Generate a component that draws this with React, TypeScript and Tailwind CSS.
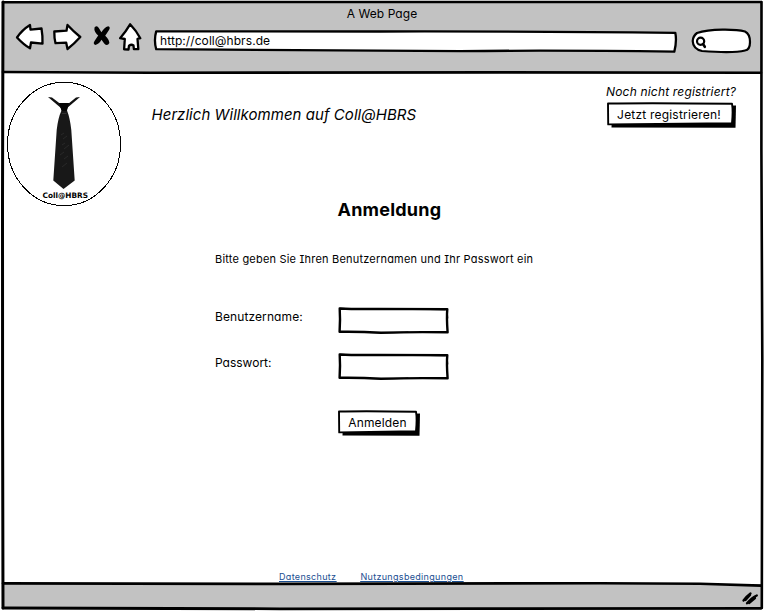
import React from "react";

const sketchFont =
  "font-[Inter,'Open_Sans',sans-serif] [font-feature-settings:'cv11','cv08'] whitespace-nowrap";

function Frame() {
  return (
    <svg
      className="pointer-events-none absolute inset-0"
      width="764"
      height="611"
      viewBox="0 0 764 611"
      fill="none"
      stroke="black"
      strokeWidth="3"
      strokeLinecap="round"
      strokeLinejoin="round"
    >
      <path d="M3 2.3 L240 2 L761 2" strokeWidth="2.6" />
      <path d="M3 2 L2.5 200 L2.6 420 L3 608" />
      <path d="M761.5 2 L761.4 150 L762.3 360 L761.8 608" strokeWidth="2.6" />
      <path d="M3 72 L150 72.7 L500 72.4 L761 72.8" strokeWidth="2.6" />
      <path d="M3 583.4 L280 583.9 L400 583.6 L600 583.2 L700 583.8 L761 585.6" strokeWidth="2.6" />
      <path d="M3 608 L280 608.8 L480 608.6 L761 608.3" strokeWidth="2.8" />
    </svg>
  );
}

function Back() {
  return (
    <svg width="30" height="30" viewBox="15 22 30 30" fill="white" stroke="black" strokeWidth="2.3" strokeLinejoin="round">
      <path d="M17 37.5 Q22 30 30 25 L30.5 29.7 L41.5 28.5 Q42.8 36 42.5 43.7 L31 42.5 L30 48.3 Q24 45 17 37.5Z" />
    </svg>
  );
}

function Forward() {
  return (
    <svg width="31" height="30" viewBox="52 22 31 30" fill="white" stroke="black" strokeWidth="2.3" strokeLinejoin="round">
      <path d="M54.3 31.5 L66.5 30.7 L67.5 25 Q73 31 80.3 37 Q74 44 67.5 49 L66.2 42.7 L55.5 43.2 Q54.2 38 54.3 31.5Z" />
    </svg>
  );
}

function Stop() {
  return (
    <svg width="20" height="24" viewBox="92 25 20 24" fill="black">
      <path d="M94.5 27.5 Q97 25 98.8 28 L101.4 32.3 Q104 27.5 108.2 26.2 Q110.8 27 109 30 L105.2 35.8 Q109 39 109.4 43 Q107.2 47 104.2 43.4 L101.5 39.8 Q99 44.3 95.3 45 Q92.5 43.8 94.7 40.8 L98.2 35.6 Q93.7 31.5 94.5 27.5Z" />
    </svg>
  );
}

function Home() {
  return (
    <svg width="25" height="30" viewBox="117.5 22 25 30" fill="white" stroke="black" strokeWidth="2.3" strokeLinejoin="round">
      <path d="M119.6 38.2 Q125 32 129.6 24.3 Q136 31 139.8 38.2 L137 38.8 L137.8 49 L133.4 49.2 L133 45.5 Q131 44 128.5 45.7 L128 49.5 L123.6 49.3 L124.3 39Z" />
    </svg>
  );
}

function Logo() {
  return (
    <svg width="116" height="126" viewBox="6 81 116 126" className="shrink-0">
      <ellipse cx="64" cy="144" rx="56.5" ry="61.7" fill="white" stroke="black" strokeWidth="1" shapeRendering="crispEdges" />
      <path d="M48 97 L52 97.4 L60.5 104 L61.5 108.5Z M80 97 L76 97.4 L68 104 L66.5 108.5Z" fill="#111" />
      <path d="M59 103 L69 103 L67 110.5 Q70 118 71.3 130 L74.7 180.5 L63.5 189 L53.3 180.5 L56.7 130 Q58 118 61.5 110.5Z" fill="#181818" />
      <path d="M59 103 L69 103 L66.5 111 L61.8 111Z" fill="#050505" />
      <path d="M62 113.5 L66.5 113.5" stroke="#444" strokeWidth=".6" />
      <path d="M61 135l3-2m-1 6l4-3m-5 9l3-2m-1 6l5-4m-9 10l4-3m0 7l4-3m-6 11l5-4" stroke="#303030" strokeWidth=".7" />
      <text x="42.5" y="197.7" textLength="45.5" lengthAdjust="spacingAndGlyphs" fontSize="7.5" fontWeight="700" fontFamily="DejaVu Sans, sans-serif">Coll@HBRS</text>
    </svg>
  );
}

function Field({ label, className }: { label: string; className: string }) {
  return (
    <label className={`flex ${className}`}>
      <span className="block w-[122.5px] shrink-0">{label}</span>
      <span className="relative -mt-[2.5px] block h-[27px] w-[111px]">
        <input aria-label={label} className="h-full w-full bg-transparent px-2 outline-none" />
        <svg className="pointer-events-none absolute inset-0" width="111" height="27" viewBox="0 0 111 27" fill="none" stroke="black" strokeLinecap="round" strokeLinejoin="round">
          <path d="M1.7 1.5 Q18 2.3 40 1.9 Q78 2 109.3 2.2 Q108.5 10 109.6 25.3 Q70 24.9 43 25.7 Q22 24.5 1.6 24.8 Q2.4 12 1.7 1.5Z" strokeWidth="2.4" />
          <path d="M2 1.4 L30 2.5 M60 2 L107 2.7 M30 25.5 Q60 25.8 70 25.2 M109 3 L109.7 11" strokeWidth="1.2" />
        </svg>
      </span>
    </label>
  );
}

function SketchButton({ children, width, height, className }: { children: React.ReactNode; width: number; height: number; className: string }) {
  const w = width;
  const h = height;
  return (
    <button className={`relative block ${className}`}>
      <svg className="absolute inset-0" width={w} height={h} viewBox={`0 0 ${w} ${h}`}>
        <path d={`M5 6 L${w} 3.5 L${w - 0.5} ${h - 0.3} L4.5 ${h - 0.5}Z`} fill="black" />
        <path d={`M1 1.5 Q${w / 3} .8 ${w - 4} 1.7 Q${w - 2.8} 9 ${w - 4} ${h - 4.8} L1.2 ${h - 3.6}Z`} fill="white" stroke="black" strokeWidth="1.9" strokeLinejoin="round" />
      </svg>
      <span className="relative">{children}</span>
    </button>
  );
}

export default function App() {
  return (
    <div className={`relative flex h-[611px] w-[764px] flex-col overflow-hidden bg-white text-black ${sketchFont}`}>
      <header className="mx-0.5 mt-0.5 h-[71px] shrink-0 bg-[#c2c2c2]">
        <div className="h-5 pt-1 text-center text-[12px] leading-4 tracking-[0.06px]">A Web Page</div>
        <div className="flex h-[30px] pl-[13px]">
          <Back />
          <div className="ml-[7px]"><Forward /></div>
          <div className="ml-[9px] mt-[3px]"><Stop /></div>
          <div className="ml-[5.5px]"><Home /></div>
          <div className="relative ml-[9.5px] mt-2 h-[23px] w-[526px]">
            <svg className="absolute inset-0" width="526" height="23" viewBox="152 30 526 23" fill="white" stroke="black" strokeWidth="2.3" strokeLinejoin="round">
              <path d="M156.2 31.4 Q300 31 380 31.5 Q520 31.2 675.3 32.8 Q677 41 674.3 51.7 Q550 50 460 51.2 Q300 50.7 156.2 49.2 Q153.7 40 156.2 31.4Z" />
            </svg>
            <span className="relative block pl-2 pt-[3px] text-[12px] leading-4 tracking-[0.08px]">http://coll@hbrs.de</span>
          </div>
          <svg className="ml-[13px] mt-1.5" width="61" height="26" viewBox="691 28 61 26" fill="white" stroke="black" strokeWidth="2.2" strokeLinecap="round">
            <path d="M697 33 C710 28.5 736 29 745 31.5 Q750 34 750 42 Q750 50 745 50.5 C735 53 715 52 702 51 Q693 49 692.7 41 Q693 36 697 33Z" />
            <circle cx="700.6" cy="41.2" r="3.6" />
            <path d="M703 44 L704.8 46.8" strokeWidth="2.6" />
          </svg>
        </div>
      </header>
      <main className="flex flex-1 flex-col">
        <div className="flex h-[134px] items-start pl-1.5 pt-2">
          <Logo />
          <h1 className="ml-[29.5px] mt-6 w-[266.5px] text-[15px] italic leading-5 tracking-[0.05px]">Herzlich Willkommen auf Coll@HBRS</h1>
          <div className="ml-[188px] mt-[3px]">
            <p className="text-[12px] italic leading-4 tracking-[0.18px]">Noch nicht registriert?</p>
            <SketchButton width={129} height={26} className="ml-[0.5px] mt-0.5 h-[26px] w-[129px] pb-px pr-1 text-[12px] leading-4 tracking-[0.2px]">Jetzt registrieren!</SketchButton>
          </div>
        </div>
        <section className="ml-[215px] w-[340px]">
          <h2 className="-mt-2 ml-[122.5px] text-[18px] font-bold leading-[22px] tracking-[0.22px]">Anmeldung</h2>
          <p className="mt-[30px] text-[11px] leading-4 tracking-[0.2px]">Bitte geben Sie Ihren Benutzernamen und Ihr Passwort ein</p>
          <Field label="Benutzername:" className="mt-[42px] h-[46px] text-[12px] leading-4 tracking-[0.1px]" />
          <Field label="Passwort:" className="h-[47px] text-[12px] leading-4" />
          <SketchButton width={82} height={26} className="ml-[122.5px] mt-2 h-[26px] w-[82px] pb-px pr-0.5 text-[12px] leading-4 tracking-[0.15px]">Anmelden</SketchButton>
        </section>
        <nav className="mt-auto flex h-3.5 gap-6 pl-[279px] text-[9px] leading-[14px] tracking-[0.32px] text-[#194e91] underline">
          <a href="#">Datenschutz</a>
          <a href="#">Nutzungsbedingungen</a>
        </nav>
      </main>
      <footer className="mx-0.5 mb-0.5 flex h-[25px] shrink-0 justify-end bg-[#c2c2c2] pr-[3px] pt-1.5">
        <svg width="18" height="16" viewBox="741 590 18 16" fill="none" stroke="black" strokeLinecap="round">
          <path d="M743.5 600.5 Q747 596 750.5 593.5 M745.5 600 L750 595 M747 603.3 Q752 597.5 756.8 595.5 M749 603 L755 598" strokeWidth="2.3" />
        </svg>
      </footer>
      <Frame />
    </div>
  );
}
